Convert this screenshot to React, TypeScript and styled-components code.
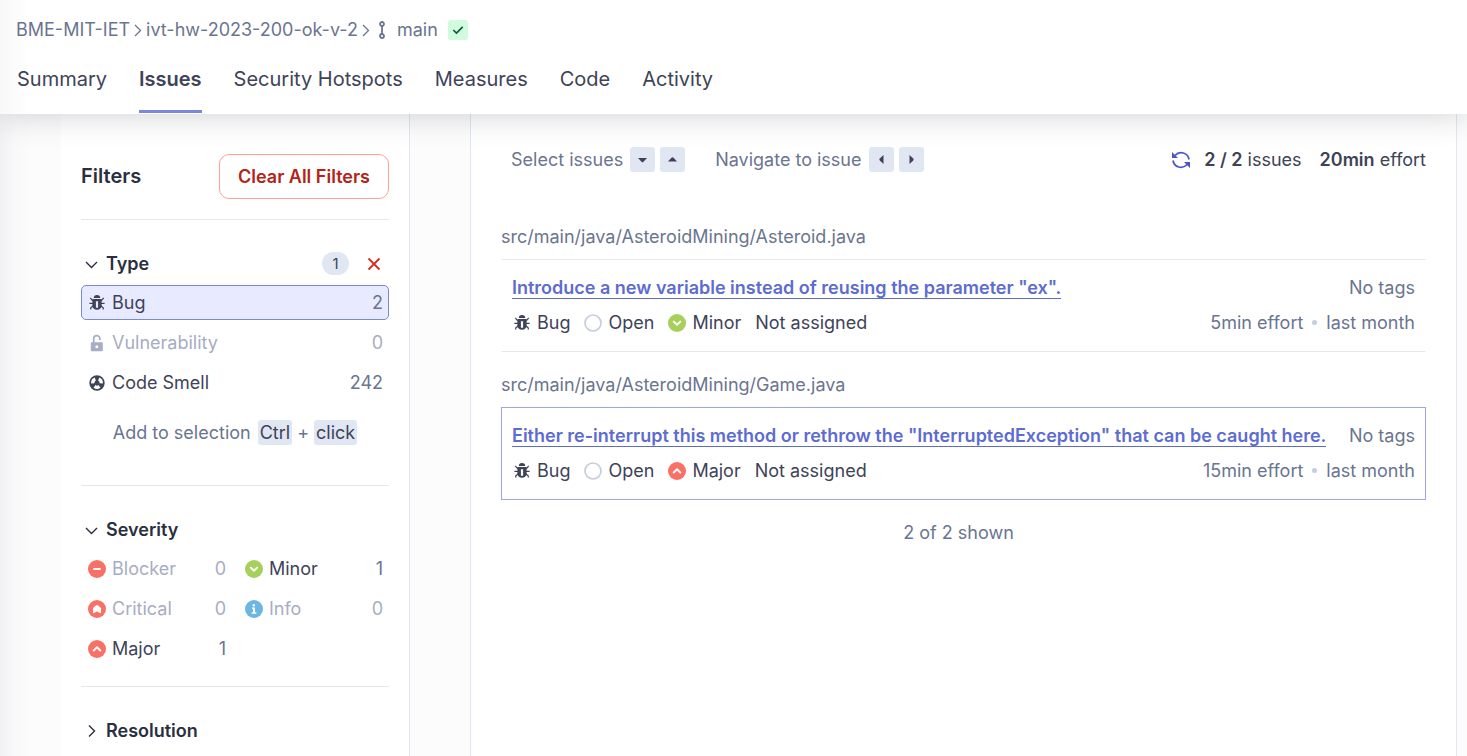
import React from 'react';
import styled, { createGlobalStyle, css } from 'styled-components';

const GlobalStyle = createGlobalStyle`
  *, *::before, *::after { box-sizing: border-box; }
  body {
    margin: 0;
    background: #fcfcfd;
    color: #3e4357;
    font-family: Inter, "Liberation Sans", sans-serif;
    font-size: 18px;
    line-height: 25px;
  }
  button {
    font: inherit;
    color: inherit;
    background: none;
    border: 0;
    padding: 0;
    cursor: pointer;
  }
  a { color: inherit; text-decoration: none; }
  ul, h1, h2, h3, p { margin: 0; padding: 0; list-style: none; }
  svg { display: block; flex: none; }
`;

const Page = styled.div`
  display: flex;
  flex-direction: column;
  min-height: 100vh;
`;

const Header = styled.header`
  position: relative;
  z-index: 1;
  padding: 17px 16px 1px;
  background: linear-gradient(to right, #f8f8f8, #fff 30px);
  box-shadow: 0 0 30px rgba(29, 33, 47, 0.22);
`;

const Breadcrumb = styled.nav`
  display: flex;
  align-items: center;
  gap: 3px;
  color: #6a7590;
`;

const Branch = styled.span`
  display: flex;
  align-items: center;
  gap: 10px;
  padding-left: 3px;
`;

const Passed = styled.span`
  display: grid;
  place-items: center;
  width: 20px;
  height: 20px;
  border-radius: 3px;
  background: #d1fadf;
  color: #05603a;
`;

const Tabs = styled.nav`
  display: flex;
  gap: 32px;
  margin-top: 23px;
  padding-left: 1px;
  font-size: 20px;
  line-height: 28px;
`;

const Tab = styled.a<{ $active?: boolean }>`
  padding-bottom: 17px;
  border-bottom: 3px solid ${p => (p.$active ? '#7b87d9' : 'transparent')};
  font-weight: ${p => (p.$active ? 600 : 400)};
`;

const Body = styled.div`
  flex: 1;
  display: flex;
  padding: 0 10px 0 61px;
  background: linear-gradient(to right, #f1f1f3, #f9f9fa 16px, #fcfcfd 32px);
`;

const Sidebar = styled.aside`
  width: 349px;
  flex: none;
  padding: 40px 20px 0;
  margin-right: 60px;
  background: #fff;
  border-right: 1px solid #e1e6f3;
`;

const FiltersHead = styled.div`
  display: flex;
  align-items: center;
  justify-content: space-between;
  padding-bottom: 20px;
`;

const FiltersTitle = styled.h2`
  font-size: 20px;
  font-weight: 600;
  color: #2a2f40;
`;

const ClearButton = styled.button`
  height: 45px;
  padding: 0 18px;
  border: 1px solid #fda29b;
  border-radius: 10px;
  color: #b42318;
  font-weight: 600;
`;

const Facet = styled.section`
  padding: 31px 0 20px;
  border-top: 1px solid #e6e7e9;
`;

const FacetHead = styled.div`
  display: flex;
  align-items: center;
  padding-bottom: 9px;
`;

const FacetToggle = styled.button`
  display: flex;
  align-items: center;
  gap: 7px;
  margin-right: auto;
  padding-left: 3px;
  color: #2a2f40;
  font-weight: 600;
`;

const CountBadge = styled.span`
  width: 27px;
  height: 23px;
  border-radius: 12px;
  background: #e1e6f3;
  font-size: 15px;
  line-height: 23px;
  text-align: center;
`;

const ClearFacet = styled.button`
  display: grid;
  place-items: center;
  width: 30px;
  height: 24px;
  margin-left: 10px;
  color: #d92d20;
`;

const Options = styled.ul<{ $columns: number }>`
  display: grid;
  grid-template-columns: repeat(${p => p.$columns}, 1fr);
  gap: 5px 6px;
`;

const Option = styled.button<{ $selected?: boolean; $empty?: boolean }>`
  display: flex;
  align-items: center;
  gap: 6px;
  width: 100%;
  height: 35px;
  padding: 0 5px 0 6px;
  border: 1px solid transparent;
  border-radius: 5px;
  ${p => p.$selected && css`
    background: #e8ebff;
    border-color: #7b87d9;
  `}
  ${p => p.$empty && css`color: #a6adc4;`}
`;

const OptionCount = styled.span<{ $empty?: boolean }>`
  margin-left: auto;
  color: ${p => (p.$empty ? '#a6adc4' : '#6a7590')};
`;

const Hint = styled.p`
  display: flex;
  justify-content: center;
  gap: 5px;
  padding: 20px 0;
  color: #6a7590;
`;

const Kbd = styled.kbd`
  display: grid;
  place-items: center;
  min-width: 25px;
  height: 25px;
  padding: 0 2px;
  border-radius: 3px;
  background: #e1e6f3;
  color: #3e4357;
  font-family: inherit;
  font-size: inherit;
`;

const KeyLabel = styled.span`
  padding-right: 2px;
`;

const Main = styled.main`
  flex: 1;
  min-width: 0;
  padding: 33px 30px 0;
  background: #fff;
  border: solid #e1e6f3;
  border-width: 0 1px;
`;

const Toolbar = styled.div`
  display: flex;
  align-items: center;
  gap: 30px;
  padding-left: 10px;
  margin-bottom: 52px;
  white-space: nowrap;
`;

const KeyHint = styled.div`
  display: flex;
  align-items: center;
  gap: 5px;
  color: #6a7590;
`;

const Totals = styled.div`
  display: flex;
  align-items: center;
  gap: 18px;
  margin-left: auto;
`;

const Reload = styled.button`
  margin-right: -5px;
  color: #4b56c2;
`;

const Strong = styled.strong`
  font-weight: 600;
`;

const FilePath = styled.h3`
  padding-bottom: 10px;
  font-size: 18px;
  font-weight: 400;
  color: #6a7590;
`;

const Issue = styled.article<{ $selected?: boolean }>`
  display: flex;
  flex-direction: column;
  gap: 10px;
  padding: 15px 10px 16px;
  margin-bottom: 20px;
  border: 1px solid ${p => (p.$selected ? '#9ca4ea' : 'transparent')};
  ${p => !p.$selected && css`
    border-top-color: #e6e7e9;
    border-bottom-color: #e6e7e9;
  `}
`;

const IssueRow = styled.div`
  display: flex;
  align-items: center;
  justify-content: space-between;
  color: #6a7590;
`;

const IssueLink = styled.a`
  color: #5d6cd0;
  font-weight: 600;
  line-height: 21px;
  border-bottom: 1px solid #5d6cd0;
`;

const Meta = styled.div`
  display: flex;
  gap: 14px;
  padding-left: 1px;
  color: #3e4357;
`;

const MetaItem = styled.span`
  display: flex;
  align-items: center;
  gap: 6px;
`;

const Effort = styled.div`
  display: flex;
  align-items: center;
  gap: 9px;
`;

const Dot = styled.span`
  width: 5px;
  height: 5px;
  border-radius: 50%;
  background: #c5cddf;
`;

const Shown = styled.p`
  padding-right: 10px;
  text-align: center;
  color: #6a7590;
`;

const BugIcon = () => (
  <svg width="18" height="18" viewBox="0 0 18 18" fill="currentColor" aria-hidden="true">
    <path d="M5.800 3.900a3.200 2.900 0 0 1 6.400 0z" />
    <path fillRule="evenodd" d="M4.400 4.900h9.200v6.600c0 2.600-1.800 4.300-4.600 4.300s-4.600-1.700-4.600-4.300zM7.900 7.200v6.500h2.200V7.200z" />
    <path d="M4.800 6.900 2.300 3.900M13.200 6.900l2.500-3M5 9.300H1.400M13 9.300h3.600M5.200 11.800 2.700 14v1.500M12.800 11.800l2.500 2.200v1.500" fill="none" stroke="currentColor" strokeWidth="1.200" />
  </svg>
);

const LockIcon = () => (
  <svg width="18" height="18" viewBox="0 0 18 18" aria-hidden="true">
    <path d="M5.700 9V4.700a3.100 3.100 0 0 1 6.200 0v1.200" fill="none" stroke="currentColor" strokeWidth="1.700" />
    <path fill="currentColor" fillRule="evenodd" d="M3.800 8.300h10a1 1 0 0 1 1 1v7a1 1 0 0 1-1 1h-10a1 1 0 0 1-1-1v-7a1 1 0 0 1 1-1zm5 3a1.500 1.500 0 1 0 0 3 1.500 1.500 0 0 0 0-3z" />
  </svg>
);

const SMELL_BLADE = 'M3.130 9.620A5.900 5.900 0 0 1 6.600 3.610L7.940 6.620A2.600 2.600 0 0 0 6.410 9.270z';

const SmellIcon = () => (
  <svg width="18" height="18" viewBox="0 0 18 18" aria-hidden="true">
    <circle cx="9" cy="9" r="7.700" fill="currentColor" />
    <g fill="#fff">
      <path d={SMELL_BLADE} />
      <path d={SMELL_BLADE} transform="rotate(120 9 9)" />
      <path d={SMELL_BLADE} transform="rotate(240 9 9)" />
    </g>
  </svg>
);

type Level = 'blocker' | 'critical' | 'major' | 'minor' | 'info';

const levelColor: Record<Level, string> = {
  blocker: '#f97066',
  critical: '#f97066',
  major: '#f97066',
  minor: '#a6d05b',
  info: '#6cb6e2',
};

const SeverityIcon = ({ level }: { level: Level }) => (
  <svg width="18" height="18" viewBox="0 0 18 18" aria-hidden="true">
    <circle cx="9" cy="9" r="9" fill={levelColor[level]} />
    <g fill="none" stroke="#fff" strokeWidth="1.900" strokeLinecap="round" strokeLinejoin="round">
      {level === 'blocker' && <path d="M6 9h6" />}
      {level === 'major' && <path d="M5.700 10.500 9 7.300l3.300 3.200" />}
      {level === 'minor' && <path d="M5.700 7.600 9 10.800l3.300-3.200" />}
    </g>
    {level === 'critical' && (
      <path d="M5 12.900V8L7.800 5.400q1.200-.8 2.400 0L13 8v4.900h-1.400l-1.300-1q-1.300-.8-2.600 0l-1.300 1z" fill="#fff" />
    )}
    {level === 'info' && (
      <g fill="#fff">
        <circle cx="8.800" cy="5.200" r="1.200" />
        <path d="M7 7.500h3v4.700h1.300v1.600H6.700v-1.600H8V9H7z" />
      </g>
    )}
  </svg>
);

const OpenIcon = () => (
  <svg width="18" height="18" viewBox="0 0 18 18" aria-hidden="true">
    <circle cx="9" cy="9" r="8" fill="none" stroke="#c5cddf" strokeWidth="1.700" />
  </svg>
);

const BranchIcon = () => (
  <svg width="10" height="20" viewBox="0 0 10 20" fill="none" stroke="currentColor" strokeWidth="1.800" aria-hidden="true">
    <circle cx="5" cy="4" r="2" />
    <circle cx="5" cy="16" r="2" />
    <path d="M5 6v8" />
  </svg>
);

const CheckIcon = () => (
  <svg width="12" height="12" viewBox="0 0 12 12" fill="none" stroke="currentColor" strokeWidth="1.700" aria-hidden="true">
    <path d="M1.300 6 4.500 9 10.700 2.800" />
  </svg>
);

const CrossIcon = () => (
  <svg width="14" height="14" viewBox="0 0 14 14" fill="none" stroke="currentColor" strokeWidth="1.900" aria-hidden="true">
    <path d="M1.500 1.500l11 11M12.500 1.500l-11 11" />
  </svg>
);

const Separator = () => (
  <svg width="10" height="14" viewBox="0 0 10 14" fill="none" stroke="currentColor" strokeWidth="1.300" aria-hidden="true">
    <path d="M2 2l5.500 5.500L2 13" />
  </svg>
);

const Chevron = ({ open }: { open?: boolean }) => (
  <svg width="15" height="15" viewBox="0 0 15 15" fill="none" stroke="currentColor" strokeWidth="1.400" aria-hidden="true">
    {open ? <path d="M2 6l5.500 5.500L13 6" /> : <path d="M5 2.500l5.500 5.500L5 13.500" />}
  </svg>
);

const arrows = {
  down: 'M2 5h9L7.500 8.700a1.400 1.400 0 0 1-2 0z',
  up: 'M2 8.500h9L7.500 4.800a1.400 1.400 0 0 0-2 0z',
  left: 'M8.500 2v9L4.800 7.500a1.400 1.400 0 0 1 0-2z',
  right: 'M4.500 2v9l3.700-3.500a1.400 1.400 0 0 0 0-2z',
};

const ArrowKey = ({ dir }: { dir: keyof typeof arrows }) => (
  <Kbd aria-label={dir}>
    <svg width="13" height="13" viewBox="0 0 13 13" fill="currentColor" aria-hidden="true">
      <path d={arrows[dir]} />
    </svg>
  </Kbd>
);

const ReloadIcon = () => (
  <svg width="20" height="20" viewBox="0 0 20 20" aria-hidden="true">
    <path d="M4 5.500A8 8 0 0 1 18 9.500M16 14.500A8 8 0 0 1 2 10.500" fill="none" stroke="currentColor" strokeWidth="1.700" />
    <path d="M1 2v6h6zM19 18v-6h-6z" fill="currentColor" />
  </svg>
);

interface OptionRowProps {
  icon: React.ReactNode;
  label: string;
  count: number;
  selected?: boolean;
}

const OptionRow = ({ icon, label, count, selected }: OptionRowProps) => (
  <li>
    <Option $selected={selected} $empty={count === 0} aria-pressed={!!selected}>
      {icon}
      {label}
      <OptionCount $empty={count === 0}>{count}</OptionCount>
    </Option>
  </li>
);

interface IssueCardProps {
  title: string;
  level: Level;
  levelName: string;
  effort: string;
  selected?: boolean;
}

const IssueCard = ({ title, level, levelName, effort, selected }: IssueCardProps) => (
  <Issue $selected={selected}>
    <IssueRow>
      <IssueLink href="#issue">{title}</IssueLink>
      <span>No tags</span>
    </IssueRow>
    <IssueRow>
      <Meta>
        <MetaItem><BugIcon />Bug</MetaItem>
        <MetaItem><OpenIcon />Open</MetaItem>
        <MetaItem><SeverityIcon level={level} />{levelName}</MetaItem>
        <MetaItem>Not assigned</MetaItem>
      </Meta>
      <Effort>
        <span>{effort}</span>
        <Dot />
        <span>last month</span>
      </Effort>
    </IssueRow>
  </Issue>
);

const tabs = ['Summary', 'Issues', 'Security Hotspots', 'Measures', 'Code', 'Activity'];

export default function App() {
  return (
    <Page>
      <GlobalStyle />
      <Header>
        <Breadcrumb aria-label="Breadcrumb">
          <a href="#org">BME-MIT-IET</a>
          <Separator />
          <a href="#project">ivt-hw-2023-200-ok-v-2</a>
          <Separator />
          <Branch>
            <BranchIcon />
            main
            <Passed><CheckIcon /></Passed>
          </Branch>
        </Breadcrumb>
        <Tabs aria-label="Project">
          {tabs.map(t => (
            <Tab key={t} href={`#${t}`} $active={t === 'Issues'}>{t}</Tab>
          ))}
        </Tabs>
      </Header>
      <Body>
        <Sidebar>
          <FiltersHead>
            <FiltersTitle>Filters</FiltersTitle>
            <ClearButton>Clear All Filters</ClearButton>
          </FiltersHead>
          <Facet>
            <FacetHead>
              <FacetToggle aria-expanded="true"><Chevron open />Type</FacetToggle>
              <CountBadge>1</CountBadge>
              <ClearFacet aria-label="Clear type filter"><CrossIcon /></ClearFacet>
            </FacetHead>
            <Options $columns={1}>
              <OptionRow icon={<BugIcon />} label="Bug" count={2} selected />
              <OptionRow icon={<LockIcon />} label="Vulnerability" count={0} />
              <OptionRow icon={<SmellIcon />} label="Code Smell" count={242} />
            </Options>
            <Hint>
              <KeyLabel>Add to selection</KeyLabel>
              <Kbd>Ctrl</Kbd>
              +
              <Kbd>click</Kbd>
            </Hint>
          </Facet>
          <Facet>
            <FacetHead>
              <FacetToggle aria-expanded="true"><Chevron open />Severity</FacetToggle>
            </FacetHead>
            <Options $columns={2}>
              <OptionRow icon={<SeverityIcon level="blocker" />} label="Blocker" count={0} />
              <OptionRow icon={<SeverityIcon level="minor" />} label="Minor" count={1} />
              <OptionRow icon={<SeverityIcon level="critical" />} label="Critical" count={0} />
              <OptionRow icon={<SeverityIcon level="info" />} label="Info" count={0} />
              <OptionRow icon={<SeverityIcon level="major" />} label="Major" count={1} />
            </Options>
          </Facet>
          <Facet>
            <FacetToggle aria-expanded="false"><Chevron />Resolution</FacetToggle>
          </Facet>
        </Sidebar>
        <Main>
          <Toolbar>
            <KeyHint>
              <KeyLabel>Select issues</KeyLabel>
              <ArrowKey dir="down" />
              <ArrowKey dir="up" />
            </KeyHint>
            <KeyHint>
              <KeyLabel>Navigate to issue</KeyLabel>
              <ArrowKey dir="left" />
              <ArrowKey dir="right" />
            </KeyHint>
            <Totals>
              <Reload aria-label="Reload"><ReloadIcon /></Reload>
              <span><Strong>2 / 2</Strong> issues</span>
              <span><Strong>20min</Strong> effort</span>
            </Totals>
          </Toolbar>
          <FilePath>src/main/java/AsteroidMining/Asteroid.java</FilePath>
          <IssueCard
            title={'Introduce a new variable instead of reusing the parameter "ex".'}
            level="minor"
            levelName="Minor"
            effort="5min effort"
          />
          <FilePath>src/main/java/AsteroidMining/Game.java</FilePath>
          <IssueCard
            title={'Either re-interrupt this method or rethrow the "InterruptedException" that can be caught here.'}
            level="major"
            levelName="Major"
            effort="15min effort"
            selected
          />
          <Shown>2 of 2 shown</Shown>
        </Main>
      </Body>
    </Page>
  );
}
